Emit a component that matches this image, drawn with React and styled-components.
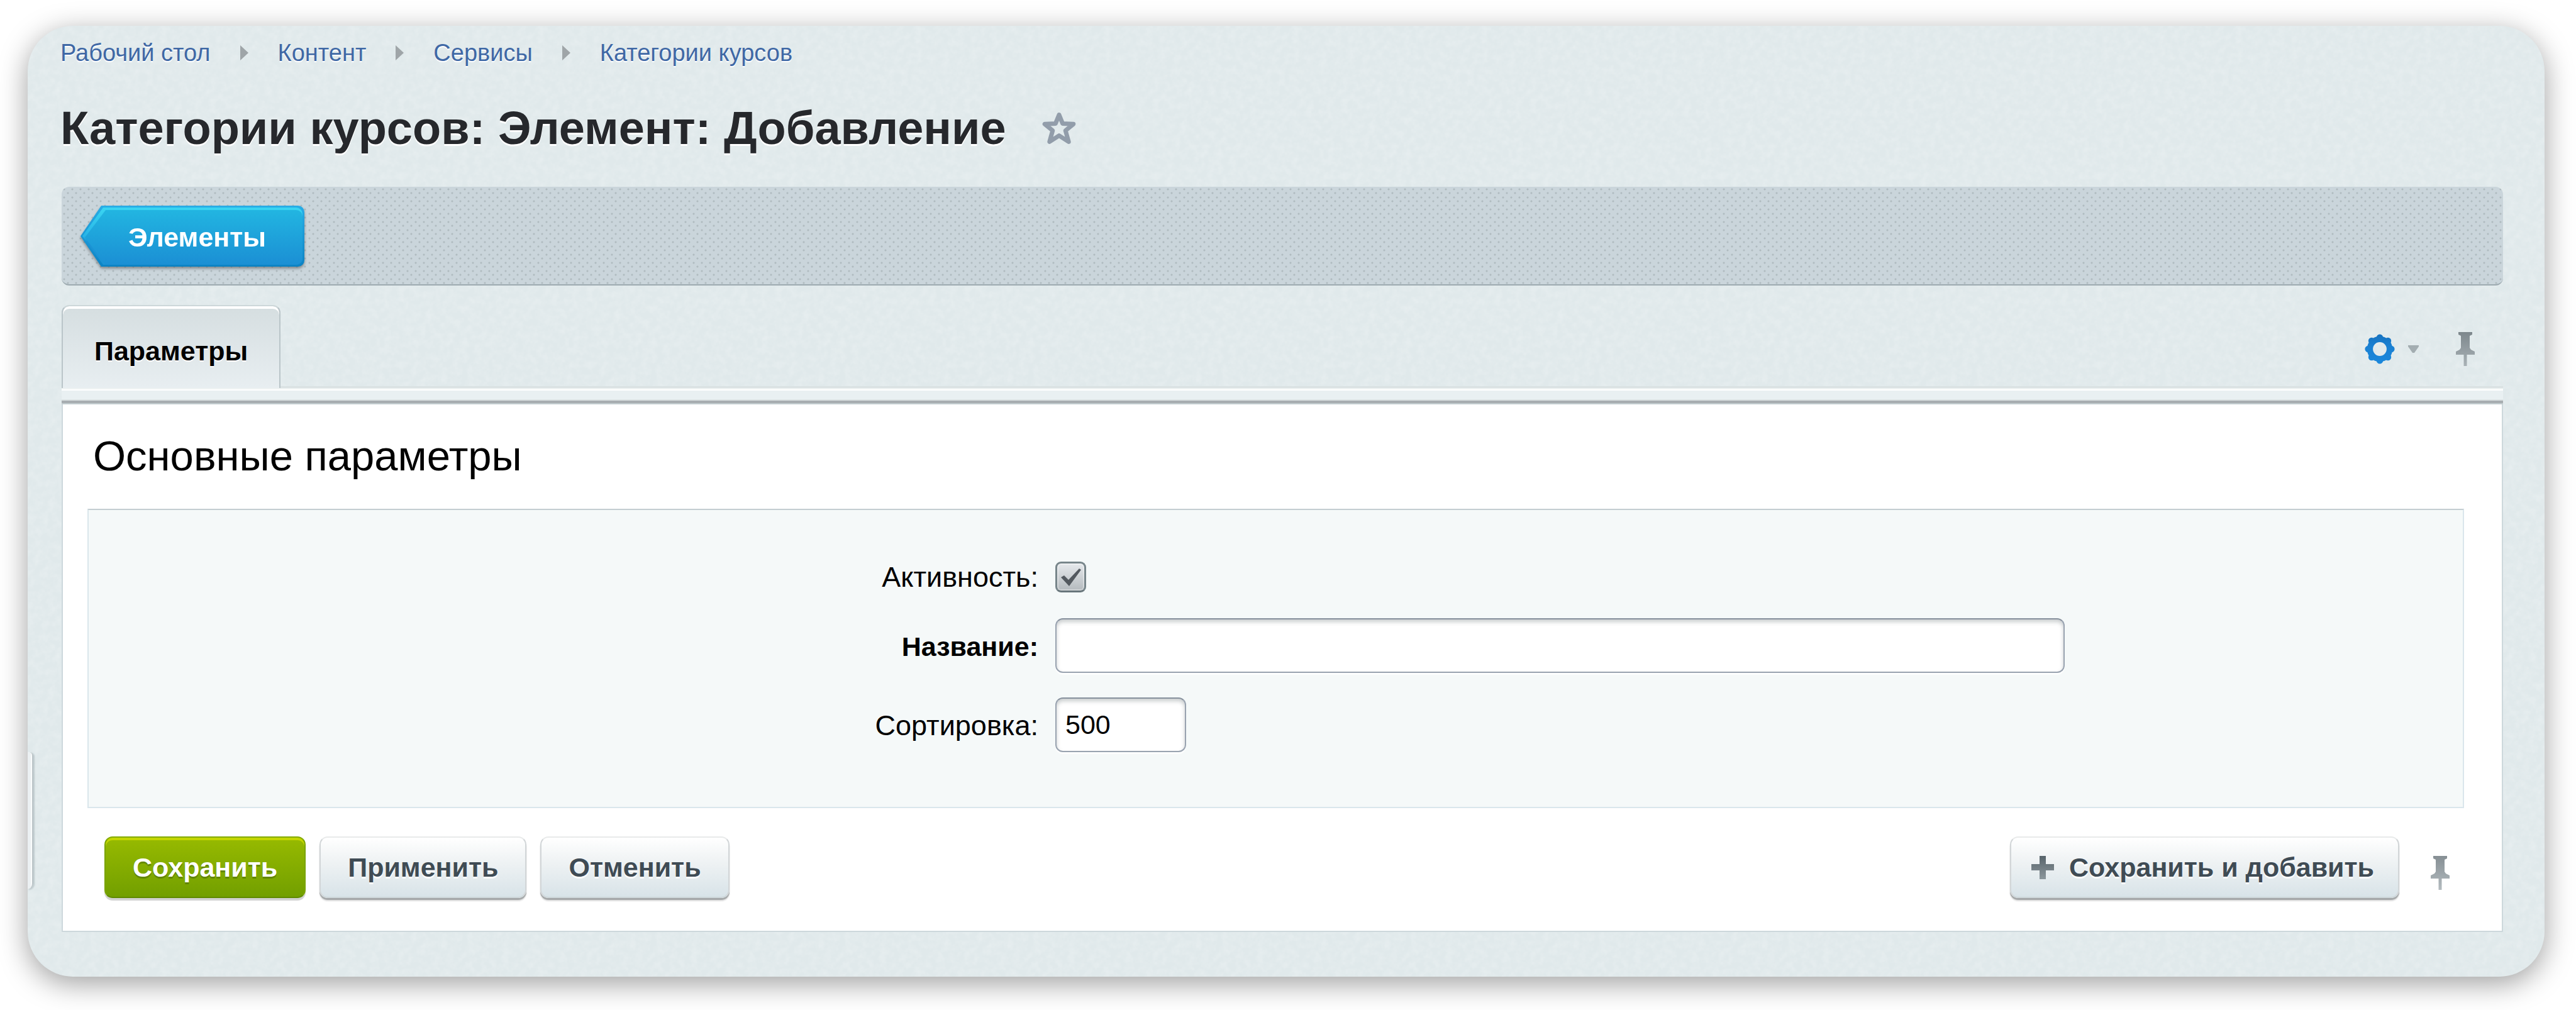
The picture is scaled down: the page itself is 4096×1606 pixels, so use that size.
import React, { useState } from 'react';
import styled, { createGlobalStyle, css } from 'styled-components';

const GlobalStyle = createGlobalStyle`
  *, *::before, *::after { box-sizing: border-box; }
  body {
    margin: 0;
    background: #fff;
    color: #000;
    font-family: "Liberation Sans", Arial, Helvetica, sans-serif;
  }
  button, input { font-family: inherit; }
`;

const paper = `url("data:image/svg+xml,${encodeURIComponent(
  '<svg xmlns="http://www.w3.org/2000/svg" width="300" height="300">' +
    '<filter id="n" x="0" y="0" width="100%" height="100%">' +
    '<feTurbulence type="fractalNoise" baseFrequency="0.09" numOctaves="3" stitchTiles="stitch"/>' +
    '<feColorMatrix values="0 0 0 0 1  0 0 0 0 1  0 0 0 0 1  1.4 0 0 0 -0.5"/>' +
    '</filter><rect width="300" height="300" filter="url(#n)" opacity="0.28"/></svg>'
)}")`;

const Page = styled.div`
  padding: 41px 50px 54px 44px;
`;

const Window = styled.div`
  position: relative;
  padding-bottom: 71px;
  border-radius: 72px;
  background: ${paper} #e0e9eb;
  box-shadow: 0 11px 46px rgba(0, 0, 0, 0.38);
`;

const Header = styled.header`
  padding: 21px 52px 51px;
`;

const Breadcrumbs = styled.nav`
  display: flex;
  align-items: center;
  gap: 47px;
`;

const Crumb = styled.a`
  color: #3f68a5;
  font-size: 38px;
  line-height: 44px;
  text-decoration: none;
  text-shadow: 0 2px 0 #fff;
`;

const TitleRow = styled.div`
  display: flex;
  align-items: center;
  gap: 56px;
  margin-top: 56px;
`;

const Title = styled.h1`
  margin: 0;
  color: #26282c;
  font-size: 74px;
  line-height: 84px;
  text-shadow: 0 3px 0 #fff;
`;

const IconButton = styled.button`
  display: flex;
  align-items: center;
  gap: 20px;
  padding: ${({ $lowered }) => ($lowered ? '18px 0 0' : '0')};
  border: 0;
  background: none;
  cursor: pointer;
`;

const Content = styled.main`
  padding: 0 66px 0 54px;
`;

const Toolbar = styled.div`
  display: flex;
  padding: 30px 30px 28px;
  border-bottom: 2px solid #9daab0;
  border-radius: 12px;
  background:
    radial-gradient(circle at 4px 4px, #b0bbc0 1px, transparent 2px) 0 0 / 13px 13px,
    radial-gradient(circle at 10px 10px, #b0bbc0 1px, transparent 2px) 0 0 / 13px 13px,
    #cad5db;
`;

const arrowShape = css`
  clip-path: polygon(33px 0, 100% 0, 100% 100%, 33px 100%, 0 50%);
  border-radius: 0 10px 10px 0;
`;

const BackLink = styled.a`
  display: block;
  color: #fff;
  font-size: 43px;
  font-weight: bold;
  line-height: 52px;
  text-decoration: none;
  filter: drop-shadow(0 3px 2px rgba(0, 0, 0, 0.35));
`;

const BackEdge = styled.span`
  ${arrowShape}
  display: block;
  padding: 3px;
  background: linear-gradient(#29ade6, #0c83c4);
`;

const BackGlow = styled.span`
  ${arrowShape}
  display: block;
  padding: 4px 0 0 4px;
  background: linear-gradient(#3ad5f2, #28b4e6 50%, #1b93d4 60%);
`;

const BackFace = styled.span`
  ${arrowShape}
  display: block;
  padding: 17px 58px 18px 69px;
  background: linear-gradient(#22b5e1, #1b8fd4);
`;

const TabBar = styled.div`
  display: flex;
  justify-content: space-between;
  margin-top: 31px;
  padding-right: 45px;
  box-shadow: inset 0 -3px 0 #dae2e3;
`;

const Tab = styled.button`
  padding: 45px 50px 33px;
  border: 2px solid #bac5c9;
  border-top-color: #cdd7d9;
  border-bottom: 0;
  border-radius: 12px 12px 0 0;
  background: linear-gradient(#d5dee0, #e8eef1);
  box-shadow: inset 0 4px 0 #fff;
  color: #000;
  font-size: 43px;
  font-weight: bold;
  line-height: 52px;
  text-shadow: 0 2px 0 #fff;
  cursor: pointer;
`;

const TabTools = styled.div`
  display: flex;
  align-items: center;
  gap: 59px;
  padding-top: 8px;
`;

const TabRule = styled.div`
  height: 26px;
  background: linear-gradient(
    #eef3f3 0 2px,
    #fff 2px 4px,
    #e9f0f2 4px 18px,
    #dce3e4 18px 20px,
    #a7adb0 20px 24px,
    #c3cdd0 24px 26px
  );
`;

const Panel = styled.form`
  display: block;
  padding: 44px 60px 52px 39px;
  border: solid #cdd8dc;
  border-width: 0 2px 2px;
  background: #fff;
`;

const PanelTitle = styled.h2`
  margin: 0 0 46px;
  padding-left: 9px;
  font-size: 67px;
  font-weight: normal;
  line-height: 76px;
`;

const Fields = styled.div`
  display: grid;
  grid-template-columns: 40% 1fr;
  align-items: center;
  gap: 39px 27px;
  padding: 79px 0 87px;
  border: 2px solid #dae6ec;
  border-top-color: #c3cdd1;
  background: #f5f9f9;
`;

const Label = styled.label`
  padding-top: 2px;
  font-size: ${({ $required }) => ($required ? 43 : 45)}px;
  font-weight: ${({ $required }) => ($required ? 'bold' : 'normal')};
  line-height: 52px;
  text-align: right;
`;

const CheckHolder = styled.span`
  position: relative;
  display: flex;
  width: 49px;
  height: 49px;
`;

const CheckInput = styled.input`
  appearance: none;
  width: 100%;
  height: 100%;
  margin: 0;
  border: 3px solid #78868b;
  border-bottom-color: #68767b;
  border-radius: 9px;
  background: linear-gradient(#e6e9ec, #b4babe);
  box-shadow: inset 0 0 0 2px rgba(255, 255, 255, 0.35);

  & + svg { visibility: hidden; }
  &:checked + svg { visibility: visible; }
`;

const CheckMark = styled.svg`
  position: absolute;
  inset: 0;
  pointer-events: none;
`;

const TextInput = styled.input`
  width: ${({ $short }) => ($short ? 208 : 1605)}px;
  max-width: 100%;
  height: 87px;
  padding: 0 14px;
  border: 2px solid #99a3b0;
  border-top-color: #87919d;
  border-radius: 12px;
  background: #fff;
  box-shadow: inset 0 4px 6px rgba(60, 75, 80, 0.28), 0 3px 1px rgba(255, 255, 255, 0.8);
  color: #000;
  font-size: 43px;
`;

const Footer = styled.div`
  display: flex;
  justify-content: space-between;
  padding: 45px 23px 0 27px;
`;

const FooterGroup = styled.div`
  display: flex;
  align-items: center;
  gap: ${({ $wide }) => ($wide ? 50 : 22)}px;
`;

const primary = css`
  border-color: #84aa00 #7aa300 #5f8a00;
  background: linear-gradient(#97ba00, #729f00);
  box-shadow: inset 0 4px 0 #c4d600, 0 4px 1px rgba(0, 0, 0, 0.18);
  color: #fff;
  text-shadow: 0 3px 0 rgba(70, 100, 0, 0.5);
`;

const Button = styled.button`
  display: flex;
  align-items: center;
  gap: 24px;
  height: 98px;
  padding: 0 ${({ $icon }) => ($icon ? 38 : 43)}px;
  ${({ $icon }) => $icon && 'padding-left: 32px;'}
  border: 2px solid #d2d6d8;
  border-top-color: #e8eaea;
  border-bottom-color: #cdd6d9;
  border-radius: 13px;
  background: linear-gradient(#fff, #f1f4f5 35%, #d8e3e8);
  box-shadow: 0 3px 1px #a3a6a7, 0 5px 2px rgba(0, 0, 0, 0.12);
  color: #3f4b54;
  font-size: 43px;
  font-weight: bold;
  line-height: 52px;
  text-shadow: 0 3px 0 rgba(255, 255, 255, 0.9);
  cursor: pointer;
  ${({ $primary }) => $primary && primary}
`;

const SideHandle = styled.button`
  position: absolute;
  bottom: 139px;
  left: 0;
  width: 9px;
  height: 218px;
  padding: 0;
  border: 0;
  border-right: 2px solid #bcc5c8;
  border-radius: 0 9px 14px 0;
  background: linear-gradient(90deg, #ebf0f2 5px, #fafcfc 5px);
  box-shadow: 2px 1px 2px rgba(90, 110, 120, 0.25);
  cursor: pointer;
`;

function CrumbArrow() {
  return (
    <svg width="13" height="24" viewBox="0 0 13 24" aria-hidden="true">
      <path d="M0 0L13 12L0 24Z" fill="#9fa5a8" />
    </svg>
  );
}

function StarIcon() {
  return (
    <svg width="56" height="56" viewBox="0 0 56 56" aria-hidden="true">
      <path
        d="M28 6.5L33.6 20.4L50.8 21.2L38.2 31.6L43.2 49.4L28 39.6L12.8 49.4L17.8 31.6L5.2 21.2L22.4 20.4Z"
        fill="none"
        stroke="#929daa"
        strokeWidth="7"
        strokeLinejoin="round"
      />
    </svg>
  );
}

const TEETH = [0, 45, 90, 135, 180, 225, 270, 315];

function GearIcon() {
  return (
    <svg width="50" height="50" viewBox="-25 -25 50 50" aria-hidden="true">
      <defs>
        <linearGradient id="gear" gradientUnits="userSpaceOnUse" x1="0" y1="-24" x2="0" y2="24">
          <stop offset="0" stopColor="#1672bf" />
          <stop offset="0.4" stopColor="#1a80d2" />
          <stop offset="1" stopColor="#1b88dc" />
        </linearGradient>
      </defs>
      <circle r="15.6" fill="none" stroke="url(#gear)" strokeWidth="9.4" />
      <g fill="url(#gear)">
        {TEETH.map((angle) => {
          const a = (angle * Math.PI) / 180;
          return <circle key={angle} cx={18.4 * Math.cos(a)} cy={18.4 * Math.sin(a)} r="5.2" />;
        })}
      </g>
    </svg>
  );
}

function CaretIcon() {
  return (
    <svg width="17" height="12" viewBox="0 0 17 12" aria-hidden="true">
      <path d="M0 0H17V2L10 12H7L0 2Z" fill="#a3adb1" />
    </svg>
  );
}

function PinIcon({ id, from, to }) {
  return (
    <svg width="30" height="55" viewBox="0 0 30 55" aria-hidden="true">
      <defs>
        <linearGradient id={id} x1="0" y1="0" x2="0" y2="1">
          <stop offset="0" stopColor={from} />
          <stop offset="1" stopColor={to} />
        </linearGradient>
      </defs>
      <path
        d="M4 0H26V4L22 6V25L24 28L30 31V36H17.5V54H12.5V36H0V31L6 28L8 25V6L4 4Z"
        fill={`url(#${id})`}
      />
    </svg>
  );
}

function PlusIcon() {
  return (
    <svg width="36" height="39" viewBox="0 0 36 39" aria-hidden="true">
      <defs>
        <linearGradient id="plus" x1="0" y1="0" x2="0" y2="1">
          <stop offset="0" stopColor="#58646b" />
          <stop offset="1" stopColor="#8c979c" />
        </linearGradient>
      </defs>
      <path d="M13 1H23V14H36V24H23V38H13V24H0V14H13Z" fill="url(#plus)" />
    </svg>
  );
}

const PATH = ['Рабочий стол', 'Контент', 'Сервисы', 'Категории курсов'];

export default function App() {
  const [active, setActive] = useState(true);
  const [name, setName] = useState('');
  const [sort, setSort] = useState('500');

  return (
    <Page>
      <GlobalStyle />
      <Window>
        <Header>
          <Breadcrumbs>
            {PATH.map((item, i) => (
              <React.Fragment key={item}>
                {i > 0 && <CrumbArrow />}
                <Crumb href="#">{item}</Crumb>
              </React.Fragment>
            ))}
          </Breadcrumbs>
          <TitleRow>
            <Title>Категории курсов: Элемент: Добавление</Title>
            <IconButton type="button">
              <StarIcon />
            </IconButton>
          </TitleRow>
        </Header>
        <Content>
          <Toolbar>
            <BackLink href="#">
              <BackEdge>
                <BackGlow>
                  <BackFace>Элементы</BackFace>
                </BackGlow>
              </BackEdge>
            </BackLink>
          </Toolbar>
          <TabBar>
            <Tab type="button">Параметры</Tab>
            <TabTools>
              <IconButton type="button">
                <GearIcon />
                <CaretIcon />
              </IconButton>
              <IconButton type="button">
                <PinIcon id="pin-top" from="#7d878c" to="#a9b2b6" />
              </IconButton>
            </TabTools>
          </TabBar>
          <TabRule />
          <Panel onSubmit={(e) => e.preventDefault()}>
            <PanelTitle>Основные параметры</PanelTitle>
            <Fields>
              <Label htmlFor="active">Активность:</Label>
              <CheckHolder>
                <CheckInput
                  id="active"
                  type="checkbox"
                  checked={active}
                  onChange={(e) => setActive(e.target.checked)}
                />
                <CheckMark viewBox="0 0 49 49" aria-hidden="true">
                  <path d="M9 25L14 22L21 29L38 11L41 13L22 39Z" fill="#53595f" />
                </CheckMark>
              </CheckHolder>
              <Label htmlFor="name" $required>Название:</Label>
              <div>
                <TextInput id="name" type="text" value={name} onChange={(e) => setName(e.target.value)} />
              </div>
              <Label htmlFor="sort">Сортировка:</Label>
              <div>
                <TextInput id="sort" type="text" $short value={sort} onChange={(e) => setSort(e.target.value)} />
              </div>
            </Fields>
            <Footer>
              <FooterGroup>
                <Button type="submit" $primary>Сохранить</Button>
                <Button type="button">Применить</Button>
                <Button type="button">Отменить</Button>
              </FooterGroup>
              <FooterGroup $wide>
                <Button type="button" $icon>
                  <PlusIcon />
                  Сохранить и добавить
                </Button>
                <IconButton type="button" $lowered>
                  <PinIcon id="pin-bottom" from="#868f94" to="#b3bbbf" />
                </IconButton>
              </FooterGroup>
            </Footer>
          </Panel>
        </Content>
        <SideHandle type="button" />
      </Window>
    </Page>
  );
}
